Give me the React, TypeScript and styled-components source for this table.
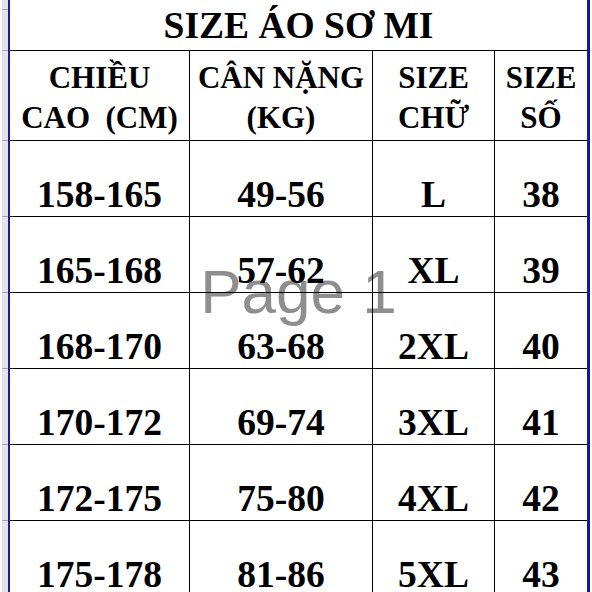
import styled, { createGlobalStyle } from 'styled-components';

const GlobalStyle = createGlobalStyle`
	html, body {
		margin: 0;
		padding: 0;
		background: #ffffff;
	}
	body {
		width: 592px;
		height: 592px;
		overflow: hidden;
	}
`;

const Page = styled.div`
	display: flex;
	flex-direction: row;
	width: 592px;
	height: 592px;
	overflow: hidden;
	background: #ffffff;
`;

const Gutter = styled.div`
	display: flex;
	flex-direction: column;
	width: 6px;
	margin-left: 2px;
	background: #e3e3ea;
	flex-shrink: 0;
`;

const GutterCell = styled.div<{ $h: number }>`
	height: ${(p) => p.$h}px;
	border-bottom: 1px solid #a3a3ad;
	box-sizing: border-box;
	flex-shrink: 0;
`;

const PageEdge = styled.div<{ $w: number; $color: string }>`
	width: ${(p) => p.$w}px;
	background: ${(p) => p.$color};
	flex-shrink: 0;
`;

const Sheet = styled.div`
	position: relative;
	width: 577px;
	flex-shrink: 0;
`;

const Watermark = styled.div`
	position: absolute;
	left: 0;
	right: 0;
	top: 261px;
	z-index: 0;
	text-align: center;
	font-family: 'Liberation Sans', Arial, sans-serif;
	font-size: 62px;
	line-height: 62px;
	color: #8e8e8e;
	pointer-events: none;
	white-space: nowrap;
`;

const Table = styled.div`
	position: relative;
	z-index: 1;
	display: grid;
	grid-template-columns: 180px 183px 122px 92px;
	grid-template-rows: 51px 90px repeat(6, 76px);
	font-family: 'Liberation Serif', 'Times New Roman', serif;
	font-weight: 700;
	color: #000000;
`;

const TitleCell = styled.div`
	grid-column: 1 / span 4;
	display: flex;
	align-items: center;
	justify-content: center;
	font-size: 37.5px;
	border-bottom: 1px solid #000;
	box-sizing: border-box;
	padding-top: 1px;
`;

const Cell = styled.div<{ $last?: boolean }>`
	display: flex;
	justify-content: center;
	align-items: flex-end;
	text-align: center;
	box-sizing: border-box;
	border-bottom: 1px solid #000;
	border-right: ${(p) => (p.$last ? 'none' : '1px solid #000')};
`;

const HeadCell = styled(Cell)`
	font-size: 31px;
	line-height: 40px;
	padding-bottom: 2px;
	white-space: pre;
`;

const DataCell = styled(Cell)`
	font-size: 37.5px;
	line-height: normal;
`;

const headers = ['CHIỀU\nCAO  (CM)', 'CÂN NẶNG\n(KG)', 'SIZE\nCHỮ', 'SIZE\nSỐ'];

const rows = [
	['158-165', '49-56', 'L', '38'],
	['165-168', '57-62', 'XL', '39'],
	['168-170', '63-68', '2XL', '40'],
	['170-172', '69-74', '3XL', '41'],
	['172-175', '75-80', '4XL', '42'],
	['175-178', '81-86', '5XL', '43'],
];

const gutterRows = [10, 41, 90, 76, 76, 76, 76, 76, 76];

const App = () => {
	return (
		<>
			<GlobalStyle />
			<Page>
				<Gutter>
					{gutterRows.map((h, i) => (
						<GutterCell key={i} $h={h} />
					))}
				</Gutter>
				<PageEdge $w={2} $color="#1d1d8f" />
				<Sheet>
					<Watermark>Page 1</Watermark>
					<Table>
						<TitleCell>SIZE ÁO SƠ MI</TitleCell>
						{headers.map((h, i) => (
							<HeadCell key={h} $last={i === headers.length - 1}>
								{h}
							</HeadCell>
						))}
						{rows.map((row) =>
							row.map((v, i) => (
								<DataCell key={row[0] + i} $last={i === row.length - 1}>
									{v}
								</DataCell>
							))
						)}
					</Table>
				</Sheet>
				<PageEdge $w={3} $color="#1414a8" />
			</Page>
		</>
	);
};

export default App;
